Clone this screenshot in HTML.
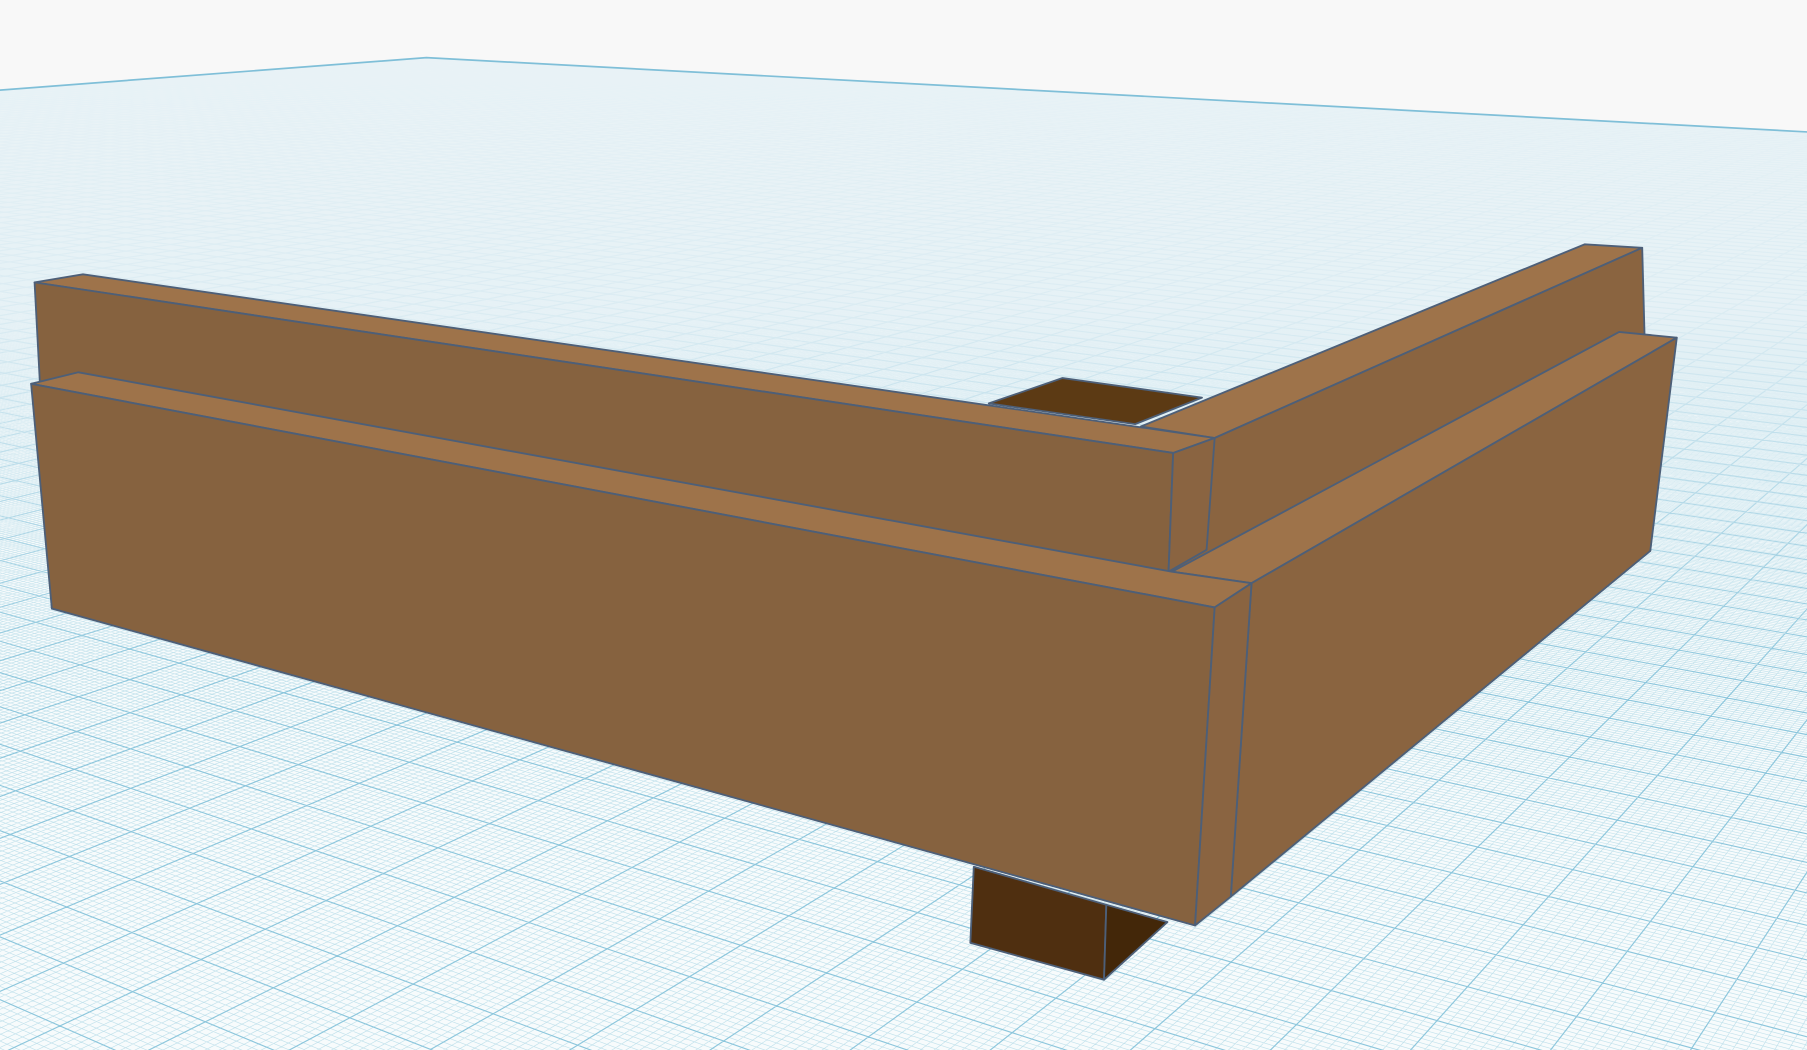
<!DOCTYPE html>
<html><head><meta charset="utf-8"><style>
html,body{margin:0;padding:0;background:#f8f8f8;overflow:hidden;width:1807px;height:1050px}
svg{display:block;position:absolute;left:0;top:0}
</style></head><body>
<svg id="s" width="1807" height="1050" viewBox="0 0 1568 911" preserveAspectRatio="none" xmlns="http://www.w3.org/2000/svg">
<defs>
<linearGradient id="haze" x1="0" y1="0" x2="0" y2="1">
<stop offset="0" stop-color="#ecf4f7" stop-opacity="1"/>
<stop offset="0.3" stop-color="#eef5f8" stop-opacity="0.8"/>
<stop offset="0.65" stop-color="#f4f9fb" stop-opacity="0"/>
</linearGradient>
<clipPath id="pc"><polygon id="plp" points="0,0"/></clipPath>
</defs>
<rect width="1568" height="911" fill="#f8f8f8"/>
<polygon id="plane" points="0,0" fill="#f7fbfc"/>
<g id="grid" clip-path="url(#pc)"></g>
<rect x="0" y="0" width="1568" height="911" fill="url(#haze)" clip-path="url(#pc)"/>
<polyline id="edge" points="0,0" fill="none" stroke="#7fbfd8" stroke-width="1.5"/>

<g stroke="#4d5f78" stroke-width="1.6" stroke-linejoin="round">
<polygon points="845,752 960,785 958,850 842,818" fill="#4f2f10"/>
<polygon points="960,785 1013,800 958,850" fill="#432709"/>
<polygon points="858,350 922,328 1043,345 985,368" fill="#5c3a14"/>
<polygon points="990,370 1375,212 1425,215 1054,380" fill="#9e734a"/>
<polygon points="1054,380 1425,215 1432,478 1017,496" fill="#8a6440"/>
<polygon points="30,245 72,238 1054,380 1018,393" fill="#9e734a"/>
<polygon points="30,245 1018,393 1014,496 45,528" fill="#86623f"/>
<polygon points="1018,393 1054,380 1047,477 1014,496" fill="#8a6441"/>
<polygon points="1017,496 1405,288 1455,293 1086,506" fill="#9e734a"/>
<polygon points="27,333 68,323 1017,496 1086,506 1054,527" fill="#9e734a"/>
<polygon points="27,333 1054,527 1037,803 45,528" fill="#86623f"/>
<polygon points="1086,506 1455,293 1432,478 1068,778" fill="#8a6440"/>
<polygon points="1054,527 1086,506 1068,778 1037,803" fill="#8a6441"/>
</g>
</svg>
<script>
(function(){
var VP1=[-2177,-88],VP2=[2118,-83];
var A=[370,50],B=[2600,170],D=[-1600,200];
function inter(p1,p2,p3,p4){var x1=p1[0],y1=p1[1],x2=p2[0],y2=p2[1],x3=p3[0],y3=p3[1],x4=p4[0],y4=p4[1];
var den=(x1-x2)*(y3-y4)-(y1-y2)*(x3-x4);var t=((x1-x3)*(y3-y4)-(y1-y3)*(x3-x4))/den;return [x1+t*(x2-x1),y1+t*(y2-y1)];}
var C=inter(B,VP2,D,VP1);
var x0=A[0],y0=A[1],x1=B[0],y1=B[1],x2=C[0],y2=C[1],x3=D[0],y3=D[1];
var dx1=x1-x2,dx2=x3-x2,dx3=x0-x1+x2-x3,dy1=y1-y2,dy2=y3-y2,dy3=y0-y1+y2-y3;
var den=dx1*dy2-dx2*dy1;
var g=(dx3*dy2-dx2*dy3)/den,h=(dx1*dy3-dx3*dy1)/den;
var a=x1-x0+g*x1,b=x3-x0+h*x3,c=x0,d=y1-y0+g*y1,e=y3-y0+h*y3,f=y0;
function P(u,v){var w=g*u+h*v+1;return [(a*u+b*v+c)/w,(d*u+e*v+f)/w];}
var m=[[a,b,c],[d,e,f],[g,h,1]];
function inv(m){var A=m[0][0],B=m[0][1],Cc=m[0][2],Dd=m[1][0],E=m[1][1],F=m[1][2],G=m[2][0],H=m[2][1],I=m[2][2];
return [[E*I-F*H,-(B*I-Cc*H),B*F-Cc*E],[-(Dd*I-F*G),A*I-Cc*G,-(A*F-Cc*Dd)],[Dd*H-E*G,-(A*H-B*G),A*E-B*Dd]];}
var mi=inv(m);
function Q(x,y){var w=mi[2][0]*x+mi[2][1]*y+mi[2][2];return [(mi[0][0]*x+mi[0][1]*y+mi[0][2])/w,(mi[1][0]*x+mi[1][1]*y+mi[1][2])/w];}
var uv=Q(800,880);var eps=1e-4;var p0=P(uv[0],uv[1]),p1=P(uv[0]+eps,uv[1]);
var pxPerU=Math.hypot(p1[0]-p0[0],p1[1]-p0[1])/eps;
var N=Math.round(pxPerU/8.6/10)*10;
var NS="http://www.w3.org/2000/svg";
var poly=[A,B,C,D].map(function(p){return p[0].toFixed(1)+","+p[1].toFixed(1)}).join(" ");
document.getElementById("plane").setAttribute("points",poly);
document.getElementById("plp").setAttribute("points",poly);
document.getElementById("edge").setAttribute("points",D.join(",")+" "+A.join(",")+" "+B.join(","));
var minor="",major="";
for(var i=1;i<N;i++){var t=i/N;
var s1=P(t,0),e1=P(t,1),s2=P(0,t),e2=P(1,t);
var seg="M"+s1[0].toFixed(1)+" "+s1[1].toFixed(1)+"L"+e1[0].toFixed(1)+" "+e1[1].toFixed(1)+"M"+s2[0].toFixed(1)+" "+s2[1].toFixed(1)+"L"+e2[0].toFixed(1)+" "+e2[1].toFixed(1);
if(i%10==0)major+=seg;else minor+=seg;}
var g1=document.getElementById("grid");
var pa=document.createElementNS(NS,"path");pa.setAttribute("d",minor);pa.setAttribute("stroke","#c3e2ec");pa.setAttribute("stroke-width","0.6");pa.setAttribute("fill","none");g1.appendChild(pa);
var pb=document.createElementNS(NS,"path");pb.setAttribute("d",major);pb.setAttribute("stroke","#8cc6dc");pb.setAttribute("stroke-width","1");pb.setAttribute("fill","none");g1.appendChild(pb);
})();
</script>
</body></html>
